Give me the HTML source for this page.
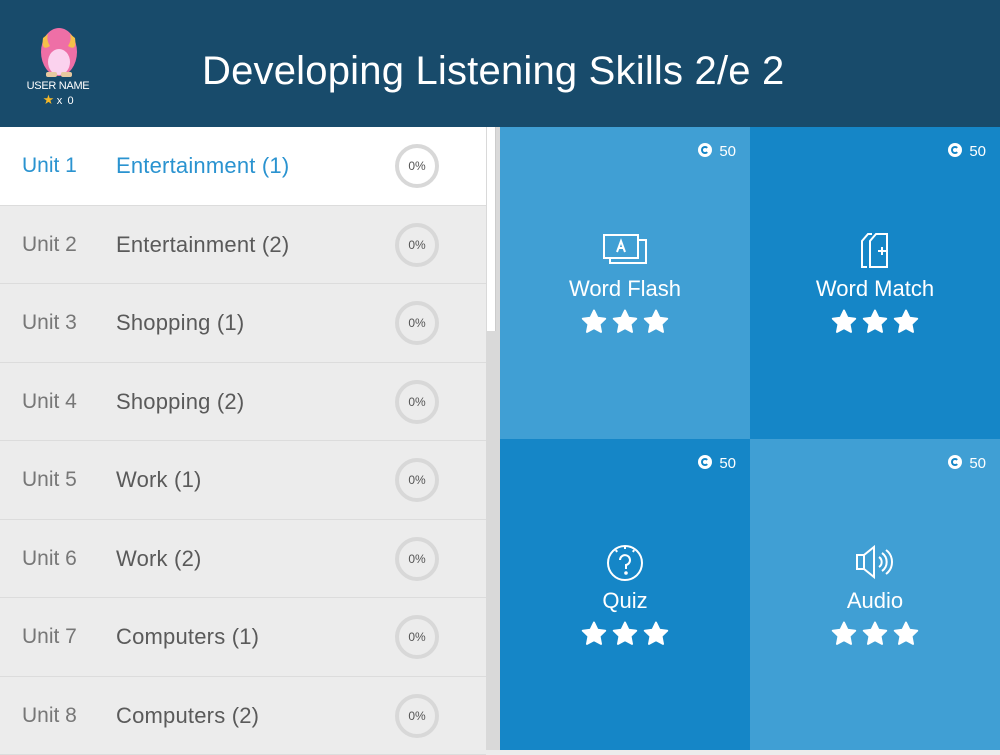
<!DOCTYPE html>
<html><head><meta charset="utf-8"><style>
*{margin:0;padding:0;box-sizing:border-box}
body{width:1000px;height:750px;overflow:hidden;font-family:"Liberation Sans",sans-serif;background:#ececec;position:relative}
.hdr{position:absolute;left:0;top:0;width:1000px;height:127px;background:#184b6b;color:#fff}
.title{position:absolute;left:202px;top:49px;font-size:40px;letter-spacing:0.2px}
.user{position:absolute;left:22px;top:80px;font-size:11px;width:72px;text-align:center;letter-spacing:-0.3px}
.row{position:absolute;left:0;width:486px;height:78.5px;background:#ececec;border-bottom:1px solid #dcdcdc}
.row .u{position:absolute;left:22px;top:27px;font-size:21px;color:#777}
.row .n{position:absolute;left:116px;top:26px;font-size:22px;color:#5a5a5a;letter-spacing:0.2px}
.row .c{position:absolute;left:395px;top:17px;width:44px;height:44px;border:4px solid #d8d8d8;border-radius:50%;font-size:12px;color:#555;text-align:center;line-height:36px}
.row.act{background:#fff}
.row.act .u,.row.act .n{color:#2a93d0}
.gut{position:absolute;left:486px;top:127px;width:14px;height:623px;background:#d9d9d9}
.thumb{position:absolute;left:487px;top:127px;width:9px;height:204px;background:#fff;border-right:1px solid #ccc}
.tile{position:absolute;width:250px;height:311.5px;color:#fff;text-align:center}
.l{background:#409fd4}.d{background:#1586c7}
.coin{position:absolute;right:14px;font-size:15px}
.coin span{display:inline-block;width:14px;height:14px;border-radius:50%;background:#fff;vertical-align:-1px;margin-right:7px;position:relative}
.coin span:after{content:"";position:absolute;left:3px;top:3px;width:8px;height:8px;border-radius:50%;border:2px solid #1586c7;border-right-color:transparent;box-sizing:border-box}
.tile .coin{top:16px}
.ic{position:absolute;left:100px;top:102px;width:50px;height:40px}
.lab{position:absolute;left:0;width:250px;top:149px;font-size:22px}
.st{position:absolute;left:81px;top:182px;width:88px;height:26px}
</style></head><body>
<div class="hdr">
<svg style="position:absolute;left:38px;top:24px" width="42" height="56" viewBox="0 0 42 56"><ellipse cx="21" cy="28" rx="18" ry="24" fill="#ee6fa6"/><path d="M5 14 Q3 28 12 22 Q8 16 10 10Z M37 14 Q39 28 30 22 Q34 16 32 10Z" fill="#f5c04a"/><ellipse cx="21" cy="38" rx="11" ry="13" fill="#fbd2ee"/><rect x="8" y="48" width="11" height="5" rx="2" fill="#e8c9a0"/><rect x="23" y="48" width="11" height="5" rx="2" fill="#e8c9a0"/></svg>
<div class="user">USER NAME<br><span style="color:#f4b728;font-size:13px">★</span> x&nbsp;&nbsp;0</div>
<div class="title">Developing Listening Skills 2/e 2</div>
</div>

<svg width="0" height="0" style="position:absolute"><defs><path id="s" d="M13 1.5l3.4 7.2 7.8 1-5.7 5.4 1.5 7.8L13 19.1 6 22.9l1.5-7.8L1.8 9.7l7.8-1z" fill="#fff" stroke="#fff" stroke-width="2" stroke-linejoin="round"/></defs></svg>

<div class="row act" style="top:127px"><div class="u">Unit 1</div><div class="n">Entertainment (1)</div><div class="c">0%</div></div>
<div class="row" style="top:205.5px"><div class="u">Unit 2</div><div class="n">Entertainment (2)</div><div class="c">0%</div></div>
<div class="row" style="top:284px"><div class="u">Unit 3</div><div class="n">Shopping (1)</div><div class="c">0%</div></div>
<div class="row" style="top:362.5px"><div class="u">Unit 4</div><div class="n">Shopping (2)</div><div class="c">0%</div></div>
<div class="row" style="top:441px"><div class="u">Unit 5</div><div class="n">Work (1)</div><div class="c">0%</div></div>
<div class="row" style="top:519.5px"><div class="u">Unit 6</div><div class="n">Work (2)</div><div class="c">0%</div></div>
<div class="row" style="top:598px"><div class="u">Unit 7</div><div class="n">Computers (1)</div><div class="c">0%</div></div>
<div class="row" style="top:676.5px"><div class="u">Unit 8</div><div class="n">Computers (2)</div><div class="c">0%</div></div>
<div class="gut"></div><div class="thumb"></div>

<div class="tile l" style="left:500px;top:127px"><div class="coin"><span></span>50</div>
<svg class="ic" viewBox="0 0 50 40" fill="none" stroke="#fff" stroke-width="2"><rect x="4" y="6" width="34" height="23"/><path d="M10 29v5h36V11h-8"/><path d="M17 23l4-11 4 11M18.5 19h5"/></svg>
<div class="lab">Word Flash</div><svg class="st" viewBox="0 0 88 26"><use href="#s"/><use href="#s" x="31"/><use href="#s" x="62"/></svg></div>
<div class="tile d" style="left:750px;top:127px"><div class="coin"><span></span>50</div>
<svg class="ic" viewBox="0 0 50 40" fill="none" stroke="#fff" stroke-width="2"><path d="M17 38h-5V12l6-7h4"/><path d="M20 38V12l6-7h11v33z"/><path d="M28 22h8M32 18v8"/></svg>
<div class="lab">Word Match</div><svg class="st" viewBox="0 0 88 26"><use href="#s"/><use href="#s" x="31"/><use href="#s" x="62"/></svg></div>
<div class="tile d" style="left:500px;top:438.5px"><div class="coin"><span></span>50</div>
<svg class="ic" viewBox="0 0 50 40" fill="none" stroke="#fff" stroke-width="2"><circle cx="25" cy="22" r="17"/><path d="M20 19a5 5 0 1 1 6 5v4"/><circle cx="26" cy="32" r="0.8" fill="#fff"/><path d="M25 6v2M16 9l1 2M34 9l-1 2"/></svg>
<div class="lab">Quiz</div><svg class="st" viewBox="0 0 88 26"><use href="#s"/><use href="#s" x="31"/><use href="#s" x="62"/></svg></div>
<div class="tile l" style="left:750px;top:438.5px"><div class="coin"><span></span>50</div>
<svg class="ic" viewBox="0 0 50 40" fill="none" stroke="#fff" stroke-width="2"><path d="M7 14h7l10-8v30l-10-8H7z M14 14v14"/><path d="M29 16a6 6 0 0 1 0 10M32 12a11 11 0 0 1 0 18M36 9a15 15 0 0 1 0 24"/></svg>
<div class="lab">Audio</div><svg class="st" viewBox="0 0 88 26"><use href="#s"/><use href="#s" x="31"/><use href="#s" x="62"/></svg></div>
</body></html>
